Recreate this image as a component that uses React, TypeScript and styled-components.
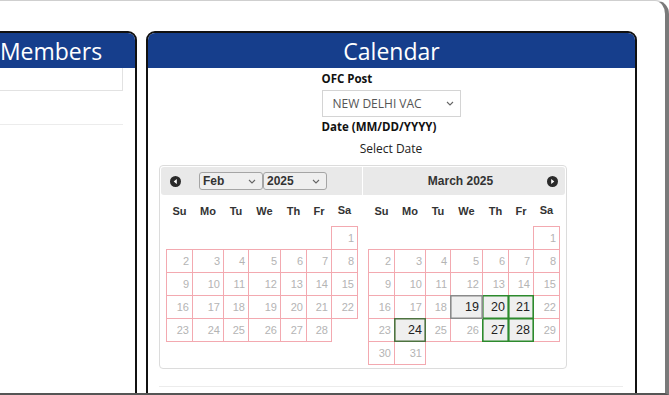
import styled, { createGlobalStyle } from "styled-components";

const GlobalStyle = createGlobalStyle`
  html, body {
    margin: 0;
    padding: 0;
    background: #fff;
    overflow: hidden;
  }
  body {
    font-family: "Open Sans", "Noto Sans", Arial, sans-serif;
  }
  * {
    box-sizing: border-box;
  }
`

const DAYS = ["Su", "Mo", "Tu", "We", "Th", "Fr", "Sa"]
const COLS = [26, 31, 25, 32, 26, 25, 26]

// available slots in March, with the edge colour each one gets
const MARCH_OPEN: Record<number, string> = {
    19: "#8a8a8a",
    20: "#2d8a2d",
    21: "#2d8a2d",
    24: "#4e7340",
    27: "#2d8a2d",
    28: "#2d8a2d",
}

function buildWeeks(firstDow: number, days: number): (number | null)[][] {
    const cells: (number | null)[] = Array(firstDow).fill(null)
    for (let d = 1; d <= days; d++) cells.push(d)
    while (cells.length % 7) cells.push(null)
    const weeks: (number | null)[][] = []
    for (let i = 0; i < cells.length; i += 7) weeks.push(cells.slice(i, i + 7))
    return weeks
}

const FEB = buildWeeks(6, 28)
const MAR = buildWeeks(6, 31)

const Page = styled.div`
  width: 669px;
  height: 395px;
  overflow: hidden;
`

const Card = styled.div`
  margin-left: -48px;
  width: 717px;
  height: 395px;
  border: 1px solid #cfcfcf;
  border-right: 4px solid #7a7a7a;
  border-bottom: 2px solid #555;
  border-top-right-radius: 14px;
  padding: 30px 28px 0 12px;
  overflow: hidden;
  display: flex;
  gap: 9px;
  align-items: flex-start;
`

const Panel = styled.section<{ $width: number }>`
  width: ${p => p.$width}px;
  flex: none;
  min-height: 420px;
  border: 2px solid #111;
  border-radius: 9px 9px 0 0;
  overflow: hidden;
  background: #fff;
`

const PanelHeader = styled.h2`
  margin: 0;
  height: 35px;
  background: #163e8c;
  color: #fff;
  font-weight: 400;
  font-size: 23px;
  line-height: 37px;
  text-align: center;
`

const MemberBody = styled.div`
  padding: 0 12px;
`

const MemberBox = styled.div`
  height: 23px;
  border: 1px solid #e2e2e2;
  border-top: none;
`

const Rule = styled.hr<{ $top: number }>`
  margin: ${p => p.$top}px 0 0;
  border: 0;
  border-top: 1px solid #ececec;
`

const CalBody = styled.div`
  padding: 2px 12px 0 11px;
`

const FormCol = styled.div`
  width: 139px;
  margin: 0 auto;
`

const Label = styled.div`
  font-size: 11.5px;
  font-weight: 700;
  line-height: 17px;
  color: #111;
`

const SelectBox = styled.div`
  height: 27px;
  margin: 3px 0 1px;
  border: 1px solid #d4d4d4;
  display: flex;
  align-items: center;
  justify-content: space-between;
  padding: 0 6px 0 10px;
  font-size: 12px;
  color: #555;
`

const Hint = styled.div`
  margin-top: 5px;
  text-align: center;
  font-size: 12px;
  line-height: 17px;
  color: #222;
`

const Picker = styled.div`
  margin-top: 8px;
  width: 408px;
  border: 1px solid #dcdcdc;
  border-radius: 4px;
  padding: 1px 1px 3px;
  display: flex;
  font-family: "Liberation Sans", Arial, sans-serif;
`

const Group = styled.div`
  width: 50%;
`

const GroupHeader = styled.div<{ $side: "left" | "right" }>`
  height: 28px;
  background: #e9e9e9;
  border-radius: ${p => (p.$side === "left" ? "3px 0 0 3px" : "0 3px 3px 0")};
  margin-right: ${p => (p.$side === "left" ? "1px" : "0")};
  display: grid;
  align-items: center;
  ${p =>
    p.$side === "left"
        ? `
    grid-template-columns: auto auto auto 1fr;
    padding-left: 9px;
  `
        : `
    grid-template-columns: 1fr auto 1fr;
    padding-right: 7px;
  `}
`

const NavSlot = styled.span<{ $gap?: number }>`
  display: flex;
  margin-right: ${p => p.$gap ?? 0}px;
  justify-self: end;
`

const MiniSelect = styled.div`
  width: 64px;
  height: 18px;
  border: 1px solid #a5a5a5;
  border-radius: 3px;
  background: #efefef;
  display: flex;
  align-items: center;
  justify-content: space-between;
  padding: 0 6px 0 3px;
  font-size: 12px;
  font-weight: 700;
  color: #333;
`

const MonthTitle = styled.div`
  font-size: 12px;
  font-weight: 700;
  color: #333;
  text-align: center;
  grid-column: 2;
`

const DayTable = styled.table`
  margin: 0 auto;
  border-collapse: collapse;
  table-layout: fixed;
`

const DayName = styled.th<{ $w: number }>`
  width: ${p => p.$w}px;
  height: 31px;
  padding: 0;
  font-size: 11px;
  font-weight: 700;
  color: #333;
  text-align: center;
`

// open days use a 1px "double" edge so they win the collapsed border over the pink grid
const DayCell = styled.td<{ $state: "empty" | "off" | "open"; $edge?: string }>`
  height: 23px;
  padding: 0 3px 0 0;
  text-align: right;
  font-size: ${p => (p.$state === "open" ? "12.5px" : "11px")};
  color: ${p => (p.$state === "open" ? "#222" : "#b4b4b4")};
  background: ${p => (p.$state === "open" ? "#efefef" : "transparent")};
  border: ${p =>
    p.$state === "empty"
        ? "none"
        : p.$state === "open"
            ? `1px double ${p.$edge}`
            : "1px solid #f3a9b0"};
  box-shadow: ${p => (p.$state === "open" ? `inset 0 0 0 0.6px ${p.$edge}` : "none")};
`

const Chevron = () => (
    <svg width="8" height="5" viewBox="0 0 8 5">
        <polyline points="1,1 4,4 7,1" fill="none" stroke="#666" strokeWidth="1.1" />
    </svg>
)

const NavIcon = ({dir}: { dir: "prev" | "next" }) => (
    <svg width="11" height="11" viewBox="0 0 12 12">
        <circle cx="6" cy="6" r="6" fill="#2b2b2b" />
        <path d={dir === "prev" ? "M7.4 3.4 L4 6 L7.4 8.6Z" : "M4.6 3.4 L8 6 L4.6 8.6Z"} fill="#fff" />
    </svg>
)

function Month({weeks, open}: { weeks: (number | null)[][]; open?: Record<number, string> }) {
    return (
        <DayTable>
            <thead>
            <tr>
                {DAYS.map((d, i) => <DayName key={d} $w={COLS[i]}>{d}</DayName>)}
            </tr>
            </thead>
            <tbody>
            {weeks.map((week, wi) =>
                <tr key={wi}>
                    {week.map((d, di) => {
                        if (d === null) return <DayCell key={di} $state="empty" />
                        if (open && open[d]) return <DayCell key={di} $state="open" $edge={open[d]}>{d}</DayCell>
                        return <DayCell key={di} $state="off">{d}</DayCell>
                    })}
                </tr>
            )}
            </tbody>
        </DayTable>
    )
}

function App() {
    return (
        <Page>
            <GlobalStyle />
            <Card>
                <Panel $width={172}>
                    <PanelHeader>Members</PanelHeader>
                    <MemberBody>
                        <MemberBox />
                        <Rule $top={33} />
                    </MemberBody>
                </Panel>
                <Panel $width={491}>
                    <PanelHeader>Calendar</PanelHeader>
                    <CalBody>
                        <FormCol>
                            <Label>OFC Post</Label>
                            <SelectBox>NEW DELHI VAC <Chevron /></SelectBox>
                            <Label>Date (MM/DD/YYYY)</Label>
                        </FormCol>
                        <Hint>Select Date</Hint>
                        <Picker>
                            <Group>
                                <GroupHeader $side="left">
                                    <NavSlot $gap={18}><NavIcon dir="prev" /></NavSlot>
                                    <MiniSelect>Feb <Chevron /></MiniSelect>
                                    <MiniSelect>2025 <Chevron /></MiniSelect>
                                </GroupHeader>
                                <Month weeks={FEB} />
                            </Group>
                            <Group>
                                <GroupHeader $side="right">
                                    <MonthTitle>March 2025</MonthTitle>
                                    <NavSlot><NavIcon dir="next" /></NavSlot>
                                </GroupHeader>
                                <Month weeks={MAR} open={MARCH_OPEN} />
                            </Group>
                        </Picker>
                        <Rule $top={17} />
                    </CalBody>
                </Panel>
            </Card>
        </Page>
    )
}

export default App;
